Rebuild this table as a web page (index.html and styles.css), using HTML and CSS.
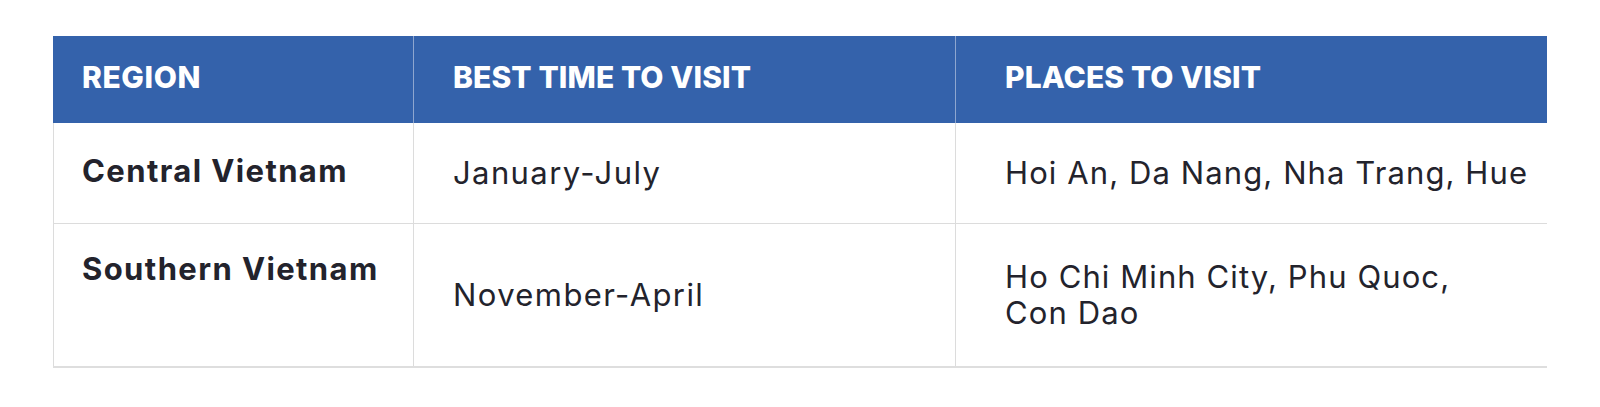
FILE: index.html
```html
<!DOCTYPE html>
<html lang="en">
<head>
<meta charset="utf-8">
<title>Vietnam regions</title>
<link rel="stylesheet" href="styles.css">
</head>
<body>
<div class="wrap">
  <table class="regions">
    <colgroup>
      <col class="c1">
      <col class="c2">
      <col class="c3">
    </colgroup>
    <thead>
      <tr>
        <th class="p1">REGION</th>
        <th class="p2">BEST TIME TO VISIT</th>
        <th class="p3">PLACES TO VISIT</th>
      </tr>
    </thead>
    <tbody>
      <tr class="row-a">
        <td class="p1 name">Central Vietnam</td>
        <td class="p2">January-July</td>
        <td class="p3">Hoi An, Da Nang, Nha Trang, Hue</td>
      </tr>
      <tr class="row-b">
        <td class="p1 name">Southern Vietnam</td>
        <td class="p2">November-April</td>
        <td class="p3">Ho Chi Minh City, Phu Quoc,<br>Con Dao</td>
      </tr>
    </tbody>
  </table>
</div>
</body>
</html>
```
FILE: styles.css
```css
html, body {
  margin: 0;
  padding: 0;
  background: #ffffff;
}
body {
  font-family: Inter, "Noto Sans", "DejaVu Sans", sans-serif;
  color: #23232c;
}
.wrap {
  padding: 36px 54px 0 53px;
}
.regions {
  width: 1493px;
  border-collapse: collapse;
  table-layout: fixed;
}
.c1 { width: 360px; }
.c2 { width: 542px; }
.c3 { width: 591px; }

.regions thead tr { height: 87px; }

.regions th {
  background: #3462ab;
  color: #ffffff;
  font-weight: 800;
  font-size: 30px;
  line-height: 36px;
  letter-spacing: 0.1px;
  text-align: left;
  height: 81px;
  padding-top: 0;
  padding-bottom: 6px;
  vertical-align: middle;
  border-left: 1px solid #8ea6cf;
}
.regions th.p1 { letter-spacing: 0.6px; }
.regions th:first-child { border-left: 1px solid #3462ab; }

.regions td {
  font-size: 31px;
  font-weight: 400;
  letter-spacing: 1.4px;
  line-height: 36px;
  vertical-align: middle;
  border-left: 1px solid #dcdcdc;
  border-bottom: 1px solid #dcdcdc;
  padding-top: 0;
  padding-bottom: 0;
}
.regions td.p3 { letter-spacing: 1.1px; }
.regions tbody tr:last-child td { border-bottom: 2px solid #dedede; }

.p1 { padding-left: 28px; }
.p2 { padding-left: 39px; }
.p3 { padding-left: 49px; }

.regions td.name {
  font-weight: 700;
  letter-spacing: 1.4px;
  vertical-align: top;
  padding-top: 30px;
}
.row-b td.name { padding-top: 27px; }

.row-a { height: 100px; }
.row-b { height: 144px; }
```
